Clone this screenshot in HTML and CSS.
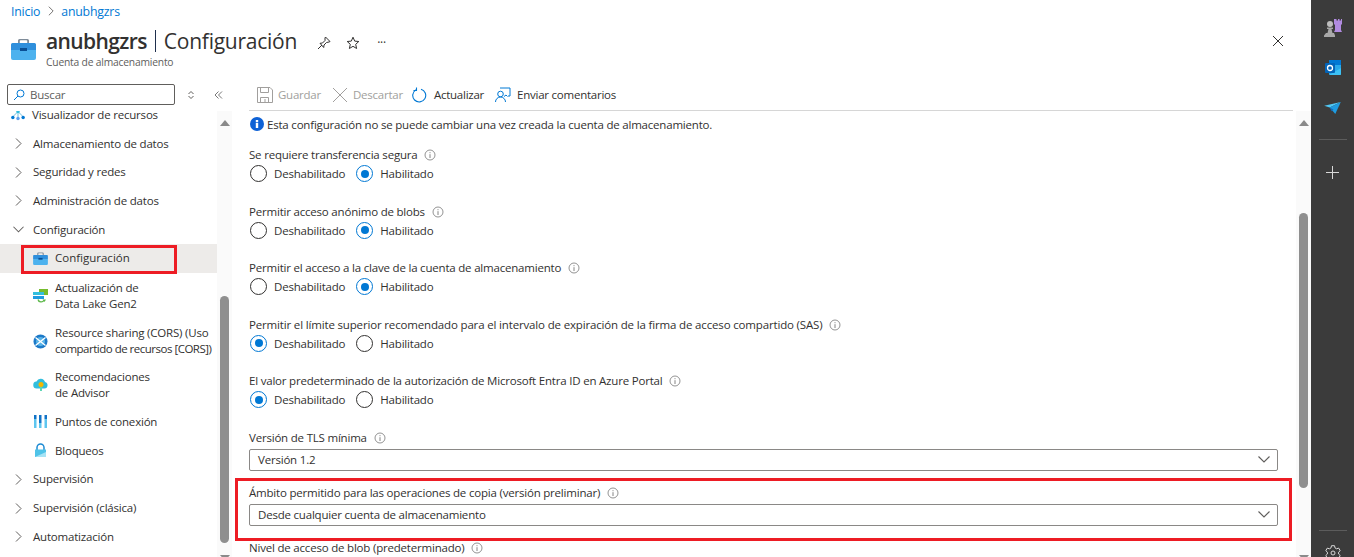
FILE: index.html
```html
<!DOCTYPE html>
<html lang="es">
<head>
    <meta charset="UTF-8">
    <title>anubhgzrs | Configuración</title>
    <link rel="stylesheet" href="styles.css">
</head>
<body>
    <svg class="defs" width="0" height="0">
        <defs>
            <symbol id="briefcase" viewBox="0 0 25 22">
                <path d="M7 6V2.500A1.500 1.500 0 0 1 8.500 1h8A1.500 1.500 0 0 1 18 2.500V6h-1.800V3a.8.8 0 0 0-.8-.8H9.600a.8.8 0 0 0-.8.8v3z" fill="#7f8c99"/>
                <path d="M1.500 5h22A1.500 1.500 0 0 1 25 6.500V12H0V6.500A1.500 1.500 0 0 1 1.500 5z" fill="#2f8fdc"/>
                <path d="M0 12h25v8a2 2 0 0 1-2 2H2a2 2 0 0 1-2-2z" fill="#4db2ee"/>
                <rect x="9" y="10" width="7" height="3" fill="#0a4f94"/>
            </symbol>
            <symbol id="chevron-right" viewBox="0 0 7 11">
                <path d="M1 .5l5 5-5 5" fill="none" stroke="#605e5c" stroke-width="1"/>
            </symbol>
            <symbol id="info" viewBox="0 0 12 12">
                <circle cx="6" cy="6" r="5" fill="none" stroke="#777" stroke-width=".8"/>
                <path d="M6 5.200V9M6 3.200v1" stroke="#777" stroke-width=".9"/>
            </symbol>
            <symbol id="chevron-down" viewBox="0 0 12 7">
                <path d="M.5 .5l5.500 5.500 5.500-5.500" fill="none" stroke="#605e5c" stroke-width="1.100"/>
            </symbol>
        </defs>
    </svg>

    <div class="portal">
        <div class="blade">
            <nav class="breadcrumb">
                <a href="#">Inicio</a>
                <svg class="crumb-sep" width="6" height="10"><use href="#chevron-right"/></svg>
                <a href="#">anubhgzrs</a>
            </nav>

            <header class="blade-head">
                <svg class="blade-icon" width="25" height="22"><use href="#briefcase"/></svg>
                <div class="blade-titles">
                    <h1><strong>anubhgzrs</strong><span class="pipe"></span>Configuración</h1>
                    <p>Cuenta de almacenamiento</p>
                </div>
                <div class="blade-actions">
                    <svg width="14" height="14" viewBox="0 0 14 14" fill="none" stroke="#323130"><path d="M8.500 1l4.500 4.500-1 .5-2.500.5-2.500 2.500-.3 2.500L3 7.300l2.500-.3L8 4.500 8 2z"/><path d="M5 9l-4 4"/></svg>
                    <svg width="14" height="14" viewBox="0 0 14 14" fill="none" stroke="#323130"><path d="M7 1.200l1.700 3.900 4.100.4-3.100 2.800.9 4.200L7 10.300l-3.600 2.200.9-4.200-3.100-2.800 4.100-.4z"/></svg>
                    <span class="dots">···</span>
                </div>
                <svg class="close" width="12" height="12" viewBox="0 0 12 12" stroke="#323130"><path d="M1 1l10 10M11 1L1 11"/></svg>
            </header>

            <div class="blade-body">
                <aside class="sidebar">
                    <div class="search-row">
                        <label class="search">
                            <svg width="12" height="12" viewBox="0 0 12 12" fill="none" stroke="#0078d4"><circle cx="7.500" cy="4.500" r="3.500"/><path d="M5 7l-4 4"/></svg>
                            <span>Buscar</span>
                        </label>
                        <svg class="sort" width="8" height="10" viewBox="0 0 8 10" fill="none" stroke="#605e5c"><path d="M1.500 4L4 1.500 6.500 4M1.500 6L4 8.500 6.500 6"/></svg>
                        <svg class="collapse" width="9" height="8" viewBox="0 0 9 8" fill="none" stroke="#777"><path d="M4.500 .5L1 4l3.500 3.500M8 .5L4.500 4 8 7.500"/></svg>
                    </div>
                    <div class="nav-wrap">
                        <ul class="nav">
                            <li class="nav-item first">
                                <svg class="nav-icon" width="14" height="12" viewBox="0 0 16 14"><path d="M8 3L2 9M8 3l6 6M8 3v8" stroke="#59b4d9" fill="none"/><circle cx="8" cy="3" r="2" fill="#32bedd"/><circle cx="2" cy="10" r="2" fill="#0078d4"/><circle cx="8" cy="11" r="2" fill="#5ea0ef"/><circle cx="14" cy="10" r="2" fill="#0078d4"/></svg>
                                <span>Visualizador de recursos</span>
                            </li>
                            <li class="nav-item"><svg class="caret" width="7" height="11"><use href="#chevron-right"/></svg><span>Almacenamiento de datos</span></li>
                            <li class="nav-item"><svg class="caret" width="7" height="11"><use href="#chevron-right"/></svg><span>Seguridad y redes</span></li>
                            <li class="nav-item"><svg class="caret" width="7" height="11"><use href="#chevron-right"/></svg><span>Administración de datos</span></li>
                            <li class="nav-item open"><svg class="caret-down" width="11" height="7"><use href="#chevron-down"/></svg><span>Configuración</span></li>
                            <li class="nav-item sub selected">
                                <svg class="nav-icon" width="15" height="13"><use href="#briefcase"/></svg>
                                <span>Configuración</span>
                            </li>
                            <li class="nav-item sub tall shift">
                                <svg class="nav-icon" width="15" height="15" viewBox="0 0 15 15"><rect x="6" y="0" width="9" height="6" fill="#76bc2d"/><rect x="0" y="3" width="11" height="3" fill="#32bedd"/><rect x="0" y="6" width="11" height="1" fill="#fff"/><rect x="0" y="7" width="11" height="3" fill="#1e9be0"/><path d="M5 10.500a3.200 3 0 0 0 6 .8" fill="none" stroke="#5db84a" stroke-width="1.300"/><path d="M9.500 10.500h3.500l-1.500 2.500z" fill="#5db84a"/></svg>
                                <span>Actualización de<br>Data Lake Gen2</span>
                            </li>
                            <li class="nav-item sub tall shift">
                                <svg class="nav-icon" width="15" height="15" viewBox="0 0 15 15"><circle cx="7.500" cy="7.500" r="7" fill="#1c79c8"/><circle cx="7.500" cy="7.500" r="4.500" fill="#59b4e8"/><path d="M2.500 3.500l5 4-5 4M12.500 3.500l-5 4 5 4" fill="none" stroke="#fff" stroke-width="1.300"/></svg>
                                <span>Resource sharing (CORS) (Uso<br><span class="tight">compartido de recursos [CORS])</span></span>
                            </li>
                            <li class="nav-item sub tall">
                                <svg class="nav-icon" width="15" height="14" viewBox="0 0 15 14"><path d="M4 10.500a3.500 3.500 0 0 1-.5-7 4.500 4.500 0 0 1 8.500 .5 3.300 3.300 0 0 1-.5 6.500z" fill="#32bedd"/><circle cx="8" cy="6.500" r="2.500" fill="#f5b800"/><rect x="7" y="9" width="2" height="4" fill="#5dd6b5"/></svg>
                                <span>Recomendaciones<br>de Advisor</span>
                            </li>
                            <li class="nav-item sub">
                                <svg class="nav-icon" width="15" height="15" viewBox="0 0 15 15"><path d="M1 5h2.500v9H1zM6 9h2.500v5H6zM11.500 5H14v9h-2.500z" fill="#5ec6ef"/><path d="M1 1h2.500v4H1zM6 1h2.500v8H6zM11.500 1H14v4h-2.500z" fill="#1173c7"/></svg>
                                <span>Puntos de conexión</span>
                            </li>
                            <li class="nav-item sub">
                                <svg class="nav-icon" width="15" height="15" viewBox="0 0 13 15"><path d="M3 7V4.500a3.500 3.500 0 0 1 7 0V7" fill="none" stroke="#1c8ad3" stroke-width="1.500"/><path d="M1 6.500h11v7.500H1z" fill="#4fc3e8"/><path d="M1 14l11-5v5z" fill="#a6e3f5"/></svg>
                                <span>Bloqueos</span>
                            </li>
                            <li class="nav-item"><svg class="caret" width="7" height="11"><use href="#chevron-right"/></svg><span>Supervisión</span></li>
                            <li class="nav-item"><svg class="caret" width="7" height="11"><use href="#chevron-right"/></svg><span>Supervisión (clásica)</span></li>
                            <li class="nav-item"><svg class="caret" width="7" height="11"><use href="#chevron-right"/></svg><span>Automatización</span></li>
                        </ul>
                        <div class="scrollbar nav-scroll">
                            <span class="arrow"></span>
                            <span class="thumb"></span>
                            <span class="arrow down"></span>
                        </div>
                    </div>
                </aside>

                <main class="content">
                    <div class="toolbar">
                        <span class="tool disabled">
                            <svg width="16" height="16" viewBox="0 0 16 16" fill="none" stroke="#a19f9d"><path d="M.5.500h12.500l2.500 2.500v12.500H.5z"/><path d="M3.500.500v5h8v-5M3.500 15.500v-5h8v5M8 12v3"/></svg>
                            Guardar
                        </span>
                        <span class="tool disabled gap-x">
                            <svg width="16" height="16" viewBox="0 0 16 16" stroke="#a19f9d"><path d="M1 1l14 14M15 1L1 15"/></svg>
                            Descartar
                        </span>
                        <span class="tool gap-r">
                            <svg width="15" height="16" viewBox="0 0 15 16" fill="none" stroke="#0078d4" stroke-width="1.100"><path d="M9 2.200a6.500 6.500 0 1 1-5 .6"/><path d="M4.500 .5v3h-3"/></svg>
                            Actualizar
                        </span>
                        <span class="tool gap-f">
                            <svg width="16" height="16" viewBox="0 0 16 16" fill="none" stroke="#0078d4"><path d="M5 1h10v8h-2M9 9.500l2-1.500 1.500 1.500"/><circle cx="5.500" cy="7" r="2.800"/><path d="M.5 15a5 5 0 0 1 10 0"/></svg>
                            Enviar comentarios
                        </span>
                    </div>

                    <div class="pane">
                        <div class="form">
                            <p class="notice">
                                <svg width="14" height="14" viewBox="0 0 14 14"><circle cx="7" cy="7" r="7" fill="#0f62d6"/><path d="M5.800 5.800h2.400V11H5.800zM5.800 3h2.400v2H5.800z" fill="#fff"/></svg>
                                Esta configuración no se puede cambiar una vez creada la cuenta de almacenamiento.
                            </p>

                            <div class="field">
                                <div class="field-label">Se requiere transferencia segura <svg width="12" height="12"><use href="#info"/></svg></div>
                                <div class="radios">
                                    <span class="radio"><i class="dot"></i>Deshabilitado</span>
                                    <span class="radio"><i class="dot on"></i>Habilitado</span>
                                </div>
                            </div>
                            <div class="field">
                                <div class="field-label">Permitir acceso anónimo de blobs <svg width="12" height="12"><use href="#info"/></svg></div>
                                <div class="radios">
                                    <span class="radio"><i class="dot"></i>Deshabilitado</span>
                                    <span class="radio"><i class="dot on"></i>Habilitado</span>
                                </div>
                            </div>
                            <div class="field">
                                <div class="field-label">Permitir el acceso a la clave de la cuenta de almacenamiento <svg width="12" height="12"><use href="#info"/></svg></div>
                                <div class="radios">
                                    <span class="radio"><i class="dot"></i>Deshabilitado</span>
                                    <span class="radio"><i class="dot on"></i>Habilitado</span>
                                </div>
                            </div>
                            <div class="field">
                                <div class="field-label long">Permitir el límite superior recomendado para el intervalo de expiración de la firma de acceso compartido (SAS) <svg width="12" height="12"><use href="#info"/></svg></div>
                                <div class="radios">
                                    <span class="radio"><i class="dot on"></i>Deshabilitado</span>
                                    <span class="radio"><i class="dot"></i>Habilitado</span>
                                </div>
                            </div>
                            <div class="field">
                                <div class="field-label">El valor predeterminado de la autorización de Microsoft Entra ID en Azure Portal <svg width="12" height="12"><use href="#info"/></svg></div>
                                <div class="radios">
                                    <span class="radio"><i class="dot on"></i>Deshabilitado</span>
                                    <span class="radio"><i class="dot"></i>Habilitado</span>
                                </div>
                            </div>

                            <div class="field select-field">
                                <div class="field-label">Versión de TLS mínima <svg width="12" height="12"><use href="#info"/></svg></div>
                                <div class="select">Versión 1.2 <svg width="12" height="7"><use href="#chevron-down"/></svg></div>
                            </div>
                            <div class="field select-field marked">
                                <div class="field-label">Ámbito permitido para las operaciones de copia (versión preliminar) <svg width="12" height="12"><use href="#info"/></svg></div>
                                <div class="select">Desde cualquier cuenta de almacenamiento <svg width="12" height="7"><use href="#chevron-down"/></svg></div>
                            </div>
                            <div class="field select-field">
                                <div class="field-label">Nivel de acceso de blob (predeterminado) <svg width="12" height="12"><use href="#info"/></svg></div>
                            </div>
                        </div>
                        <div class="scrollbar pane-scroll">
                            <span class="arrow"></span>
                            <span class="thumb"></span>
                            <span class="arrow down"></span>
                        </div>
                    </div>
                </main>
            </div>
        </div>

        <aside class="rail">
            <svg class="rail-chess" width="18" height="19" viewBox="0 0 18 19">
                <path d="M11 1h1.500v1.500H14V1h1.500v1.500H17V1h1v5l-1 1v5l1 2h-8l1-2V7l-1-1V1z" fill="#b18be0"/>
                <circle cx="6" cy="6" r="3" fill="#bdbdbd"/>
                <path d="M3 9.500h6v1.500H7.500l1 4H10l1 2.500v1.500H0v-1.500L2 15h1.500l1-4H3z" fill="#a8a8a8"/>
            </svg>
            <svg class="rail-outlook" width="16" height="16" viewBox="0 0 16 16">
                <rect x="4" y="0" width="12" height="15" rx="1" fill="#28a8ea"/>
                <rect x="4" y="0" width="12" height="5" fill="#0078d4"/>
                <path d="M4 15h12V8z" fill="#50d9ff" opacity=".5"/>
                <rect x="0" y="3" width="10" height="10" rx="1" fill="#0364b8"/>
                <circle cx="5" cy="8" r="2.500" fill="none" stroke="#fff" stroke-width="1.300"/>
            </svg>
            <svg class="rail-plane" width="17" height="12" viewBox="0 0 18 13">
                <path d="M0 4l18-4-12 6z" fill="#50c8f5"/>
                <path d="M18 0L6 6l6 7z" fill="#1f9be0"/>
                <path d="M6 6l2 4 2-2z" fill="#0f6cbd"/>
            </svg>
            <hr class="rail-line">
            <svg class="rail-plus" width="13" height="13" viewBox="0 0 13 13" stroke="#d8d8d8"><path d="M6.500 0v13M0 6.500h13"/></svg>
            <hr class="rail-line bottom">
            <svg class="rail-gear" width="16" height="16" viewBox="0 0 16 16" fill="none" stroke="#d8d8d8"><circle cx="8" cy="8" r="2"/><path d="M6.500 .7h3l.5 2.200 1.600.9 2.100-.7 1.500 2.600-1.600 1.500v1.800l1.600 1.500-1.500 2.600-2.100-.7-1.600.9-.5 2.200h-3L6 13.300l-1.600-.9-2.100.7L.8 10.500l1.600-1.500V7.200L.8 5.700l1.500-2.600 2.100.7L6 2.900z"/></svg>
        </aside>
    </div>
</body>
</html>
```

FILE: styles.css
```css
html, body {
    height: 100%;
    margin: 0;
    overflow: hidden;
}

body {
    background: white;
    color: #323130;
    font-family: "Open Sans", "Noto Sans", sans-serif;
    font-size: 11.5px;
    letter-spacing: -0.2px;
}

.defs {
    display: block;
    height: 0;
}

svg {
    flex: none;
}

.portal {
    display: flex;
    height: 557px;
    overflow: hidden;
}

.blade {
    flex: 1;
    min-width: 0;
    display: flex;
    flex-direction: column;
}

/* header */
.breadcrumb {
    display: flex;
    align-items: center;
    height: 22px;
    padding-left: 11px;
    gap: 7.500px;
    font-size: 12.3px;
}

.breadcrumb a {
    color: #0078d4;
    text-decoration: none;
}

.blade-head {
    display: flex;
    height: 52px;
    padding-left: 11px;
    align-items: flex-start;
}

.blade-icon {
    margin-top: 16px;
}

.blade-titles {
    margin-left: 10px;
}

.blade-titles h1 {
    margin: 4px 0 0;
    font-size: 21px;
    font-weight: 400;
    line-height: 30px;
    letter-spacing: -0.25px;
    display: flex;
    align-items: center;
}

.blade-titles h1 strong {
    font-weight: 600;
    letter-spacing: -0.6px;
}

.pipe {
    width: 1px;
    height: 22px;
    margin: 0 8px 0 8px;
    background: #1f2f4d;
}

.blade-titles p {
    margin: 0;
    font-size: 10.3px;
    line-height: 13px;
    color: #605e5c;
}

.blade-actions {
    display: flex;
    align-items: center;
    gap: 15px;
    margin: 12px 0 0 20px;
}

.dots {
    font-size: 12px;
    margin-left: 2px;
}

.close {
    margin: 13px 27px 0 auto;
}

.blade-body {
    flex: 1;
    display: flex;
    min-height: 0;
}

/* left menu */
.sidebar {
    width: 232px;
    flex: none;
    display: flex;
    flex-direction: column;
}

.search-row {
    display: flex;
    align-items: center;
    height: 21px;
    margin: 10px 0 6px 7px;
}

.search {
    width: 168px;
    height: 21px;
    box-sizing: border-box;
    border: 1px solid #605e5c;
    border-radius: 2px;
    display: flex;
    align-items: center;
    gap: 5px;
    padding-left: 5px;
    color: #605e5c;
}

.sort {
    margin-left: 12px;
}

.collapse {
    margin-left: 19px;
}

.nav-wrap {
    flex: 1;
    min-height: 0;
    display: flex;
    overflow: hidden;
}

.nav {
    list-style: none;
    margin: 0;
    padding: 0;
    width: 217px;
    flex: none;
}

.nav-item {
    height: 28.7px;
    display: flex;
    align-items: center;
    padding-left: 15px;
    gap: 11px;
    line-height: 16px;
    white-space: nowrap;
    position: relative;
}

.nav-item .caret-down {
    margin-left: -2px;
    margin-right: -2px;
}

.nav-item.sub {
    padding-left: 33px;
    gap: 7px;
}

.first {
    margin-top: -10.500px;
    padding-left: 11px;
    gap: 7px;
}

.tall {
    height: 45px;
    box-sizing: border-box;
}

.shift {
    padding-top: 2px;
}

.tight {
    letter-spacing: -0.5px;
}

.selected {
    background: #edebe9;
    letter-spacing: 0;
}

.selected::after {
    content: "";
    position: absolute;
    left: 21px;
    top: 1px;
    width: 150px;
    height: 23px;
    border: 3px solid #ed1c24;
}

.scrollbar {
    background: #fafafa;
    position: relative;
    flex: none;
}

.nav-scroll {
    width: 15px;
}

.pane-scroll {
    width: 15px;
    margin-left: auto;
}

.arrow {
    position: absolute;
    left: 3px;
    top: 9px;
    width: 0;
    height: 0;
    border-left: 5px solid transparent;
    border-right: 5px solid transparent;
    border-bottom: 6px solid #8a8a8a;
}

.arrow.down {
    top: 444px;
    border-bottom: 0;
    border-top: 6px solid #8a8a8a;
}

.thumb {
    position: absolute;
    left: 3px;
    width: 9px;
    background: #8f8f8f;
    border-radius: 5px;
}

.nav-scroll .thumb {
    top: 185px;
    height: 247px;
}

.pane-scroll .thumb {
    top: 102px;
    height: 275px;
}

/* right side */
.content {
    flex: 1;
    min-width: 0;
    display: flex;
    flex-direction: column;
    padding-left: 17px;
}

.toolbar {
    display: flex;
    align-items: center;
    height: 37px;
    margin-right: 18px;
    padding-top: 5px;
    box-sizing: border-box;
    border-bottom: 1px solid #d6d6d6;
    letter-spacing: -0.24px;
}

.tool {
    display: flex;
    align-items: center;
    gap: 5px;
}

.tool.disabled {
    color: #a19f9d;
}

.tool svg {
    margin-left: 8px;
}

.tool.gap-x svg {
    margin-left: 11px;
}

.tool.gap-r {
    gap: 7px;
}

.tool.gap-r svg {
    margin-left: 9px;
}

.tool.gap-f {
    gap: 6px;
}

.tool.gap-f svg {
    margin-left: 11px;
}

.pane {
    flex: 1;
    min-height: 0;
    display: flex;
}

.form {
    width: 1029px;
    flex: none;
}

.notice {
    margin: 4px 0 13px 1px;
    height: 18px;
    display: flex;
    align-items: center;
    gap: 3px;
}

.field {
    height: 56.6px;
}

.field-label {
    height: 18px;
    line-height: 18px;
    display: flex;
    align-items: center;
    gap: 7px;
}

.field-label.long {
    letter-spacing: -0.16px;
}

.radios {
    display: flex;
    height: 19px;
    padding-left: 1px;
    gap: 11px;
}

.radio {
    display: flex;
    align-items: center;
    gap: 7px;
}

.dot {
    width: 15px;
    height: 15px;
    border: 1px solid #323130;
    border-radius: 50%;
    position: relative;
}

.dot.on {
    border-color: #0078d4;
}

.dot.on::after {
    content: "";
    position: absolute;
    left: 3.500px;
    top: 3.500px;
    width: 8px;
    height: 8px;
    border-radius: 50%;
    background: #0078d4;
}

.select {
    height: 20px;
    border: 1px solid #8a8886;
    border-radius: 2px;
    display: flex;
    align-items: center;
    justify-content: space-between;
    padding: 0 7px 0 8px;
    margin-top: 2px;
}

.select-field {
    height: 55px;
}

.marked {
    position: relative;
}

.marked::after {
    content: "";
    position: absolute;
    left: -14px;
    right: -14px;
    top: -6px;
    bottom: -2px;
    border: 3px solid #ed1c24;
}

/* dark rail */
.rail {
    width: 43px;
    flex: none;
    background: #3b3b3b;
    display: flex;
    flex-direction: column;
    align-items: center;
}

.rail-chess {
    margin-top: 18px;
}

.rail-outlook {
    margin-top: 23px;
}

.rail-plane {
    margin-top: 26px;
}

.rail-line {
    width: 28px;
    margin: 25px 0 0;
    border: 0;
    border-top: 1px solid #5c5c5c;
}

.rail-plus {
    margin-top: 26px;
}

.rail-line.bottom {
    margin-top: auto;
}

.rail-gear {
    margin: 14px 0 -4px;
}
```
